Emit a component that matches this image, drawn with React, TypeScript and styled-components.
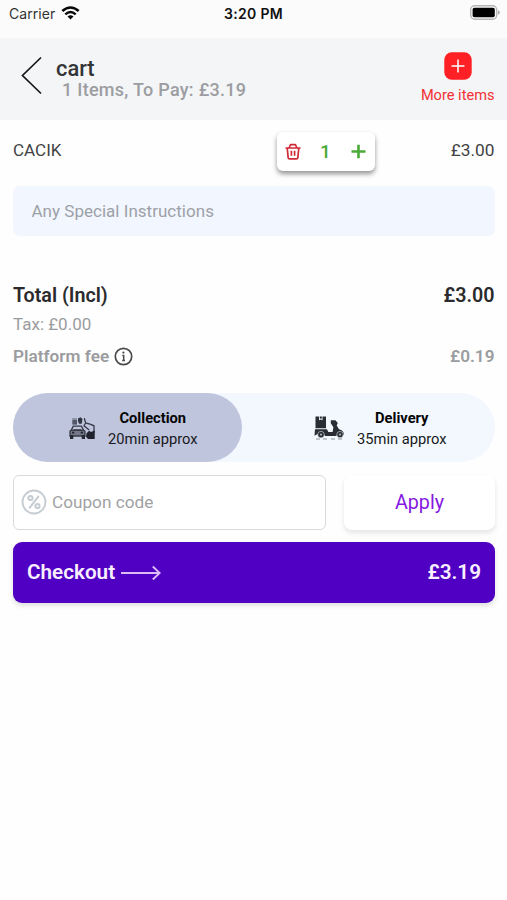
import React from "react";
import styled, { createGlobalStyle } from "styled-components";

const GlobalStyle = createGlobalStyle`
  *, *::before, *::after { box-sizing: border-box; }
  body { margin: 0; background: #fefefe; font-family: Roboto, "Liberation Sans", sans-serif; }
  button, input { font: inherit; border: 0; padding: 0; margin: 0; background: none; color: inherit; letter-spacing: inherit; }
  svg { display: block; flex: none; }
`;

const Screen = styled.div`
  width: 507px;
  height: 900px;
  overflow: hidden;
  background: #fefefe;
`;

const StatusBar = styled.div`
  display: grid;
  grid-template-columns: 1fr auto 1fr;
  align-items: center;
  height: 38px;
  padding: 0 7px 10px 9px;
  background: #fbfbfb;
  color: #111;
  font-family: Inter, sans-serif;
  font-size: 14px;
  line-height: 20px;
`;

const Carrier = styled.div`
  display: flex;
  align-items: center;
  gap: 6px;
  color: #333;
  letter-spacing: 0.05px;
  svg { margin-top: -2px; }
`;

const Clock = styled.div`
  margin-right: 2px;
  font-weight: 600;
  font-size: 14px;
  letter-spacing: 0.35px;
`;

const BatterySlot = styled.div`
  display: flex;
  justify-content: flex-end;
  margin-top: -3px;
`;

const Header = styled.header`
  display: flex;
  height: 82px;
  padding: 0 12.5px 0 21px;
  background: #f3f5f7;
`;

const BackButton = styled.button`
  width: 21px;
  height: 40px;
  margin-top: 18px;
`;

const Heading = styled.div`
  flex: 1;
  padding: 19px 0 0 14px;
`;

const Title = styled.h1`
  margin: 0;
  font-size: 21.8px;
  line-height: 23px;
  font-weight: 500;
  color: #333436;
`;

const Summary = styled.div`
  padding-left: 6px;
  font-size: 18px;
  line-height: 20px;
  font-weight: 500;
  letter-spacing: 0.28px;
  color: #9c9da1;
`;

const MoreItems = styled.button`
  display: flex;
  flex-direction: column;
  align-items: center;
  gap: 5px;
  padding-top: 14px;
  font-size: 14.6px;
  line-height: 20px;
  color: #f22f32;
`;

const Content = styled.main`
  padding: 0 12px 0 13px;
`;

const ItemRow = styled.div`
  display: grid;
  grid-template-columns: 264px 98px 1fr;
  align-items: start;
  height: 66px;
  padding-top: 12px;
  font-size: 17px;
  line-height: 37px;
  color: #424244;
`;

const ItemPrice = styled.span`
  padding-right: 0.5px;
  font-size: 17.3px;
  text-align: right;
`;

const Stepper = styled.div`
  display: grid;
  grid-template-columns: 32px 33px 33px;
  align-items: center;
  justify-items: center;
  height: 39px;
  border-radius: 6px;
  background: #fff;
  box-shadow: 0 3px 5px rgba(0, 0, 0, 0.42);
  color: #4caa38;
  font-weight: 500;
  font-size: 19px;
`;

const Instructions = styled.input`
  display: block;
  width: 100%;
  height: 50px;
  padding: 0 18px 0 18.5px;
  border-radius: 7px;
  background: #f2f6fe;
  font-size: 17px;
  letter-spacing: 0.02px;
  &::placeholder { color: #9da1a7; opacity: 1; }
`;

const Totals = styled.section`
  display: grid;
  height: 157px;
  padding-top: 44px;
  grid-template-rows: 30px 28px 35px;
`;

const TotalLine = styled.div<{ $kind: "total" | "tax" | "fee" }>`
  display: flex;
  justify-content: space-between;
  align-items: center;
  padding-right: 0.5px;
  color: ${({ $kind }) => ($kind === "total" ? "#2b2b2d" : "#9b9ca0")};
  font-weight: ${({ $kind }) => ($kind === "tax" ? 400 : 600)};
  font-size: ${({ $kind }) => ({ total: "19.7px", tax: "17px", fee: "17.2px" })[$kind]};
`;

const FeeLabel = styled.span`
  display: flex;
  align-items: center;
  gap: 5px;
  svg { margin-top: 2px; }
`;

const Modes = styled.div`
  display: grid;
  grid-template-columns: 229px 253px;
  height: 69px;
  border-radius: 35px;
  background: #f2f8fe;
`;

const Mode = styled.button<{ $active?: boolean }>`
  display: flex;
  align-items: center;
  gap: 12px;
  padding-left: ${({ $active }) => ($active ? "56px" : "72px")};
  border-radius: 35px;
  background: ${({ $active }) => ($active ? "#bfc5dd" : "transparent")};
  color: #18191c;
`;

const ModeText = styled.span`
  display: block;
  font-size: 14.7px;
  line-height: 20.5px;
  text-align: center;
  padding-top: 2px;
`;

const ModeName = styled.strong`
  display: block;
  font-weight: 700;
  color: #050506;
`;

const CouponRow = styled.div`
  display: grid;
  grid-template-columns: 313px 151px;
  justify-content: space-between;
  height: 55px;
  margin-top: 13px;
`;

const CouponField = styled.label`
  display: flex;
  align-items: center;
  gap: 5px;
  padding: 0 0 2px 7px;
  border: 1.5px solid #d9d9dc;
  border-radius: 6px;
  background: #fff;
  input { width: 240px; font-size: 17.2px; }
  input::placeholder { color: #a1a1a4; opacity: 1; }
`;

const ApplyButton = styled.button`
  padding-bottom: 1px;
  border-radius: 8px;
  background: #fff;
  box-shadow: 0 3px 5px rgba(0, 0, 0, 0.1);
  color: #8618df;
  font-size: 19.7px;
`;

const CheckoutButton = styled.button`
  display: flex;
  align-items: center;
  justify-content: space-between;
  width: 100%;
  height: 61px;
  margin-top: 12px;
  padding: 0 14px 2px;
  border-radius: 9px;
  background: #5000c3;
  box-shadow: 0 3px 5px rgba(0, 0, 0, 0.12);
  color: #f8f0ff;
  font-size: 20.7px;
  font-weight: 600;
`;

const CheckoutLabel = styled.span`
  display: flex;
  align-items: center;
  gap: 6px;
  svg { margin-top: 2px; }
`;

const WifiIcon = () => (
  <svg width="19" height="14" viewBox="0 0 19 14" fill="none" stroke="#080808">
    <path d="M1.3 5.1Q9.5-2.1 17.7 5.1" strokeWidth="2.6" />
    <path d="M4.3 8.3Q9.5 3.6 14.7 8.3" strokeWidth="2.4" />
    <path d="M6.5 10.6Q9.5 8 12.5 10.6L9.5 13.6Z" fill="#080808" stroke="none" />
  </svg>
);

const BatteryIcon = () => (
  <svg width="30" height="15" viewBox="0 0 30 15">
    <rect x=".7" y=".7" width="26" height="13.6" rx="4" fill="#fafafa" stroke="#b6b6b6" strokeWidth="1.4" />
    <rect x="2.6" y="2.7" width="22.2" height="9.6" rx="1.8" fill="#000" />
    <path d="M28 5.2Q29.8 6 29.8 7.5T28 9.8Z" fill="#aaa" />
  </svg>
);

const BackIcon = () => (
  <svg width="21" height="40" viewBox="0 0 21 40" fill="none" stroke="#171717" strokeWidth="1.7">
    <path d="M20 1.5L1.5 19.5L20 37.5" />
  </svg>
);

const AddIcon = () => (
  <svg width="28" height="28" viewBox="0 0 28 28">
    <rect x=".3" y=".3" width="27.4" height="27.4" rx="7.5" fill="#fe2024" />
    <path d="M14 7.5V20.5M7.5 14H20.5" stroke="#fff" strokeWidth="1.5" />
  </svg>
);

const TrashIcon = () => (
  <svg width="16" height="17" viewBox="0 0 16 17" fill="none" stroke="#cf2a35" strokeWidth="1.7" strokeLinejoin="round">
    <path d="M.5 5H15.5M4 5L5.6 1.7H10.4L12 5M2.2 5L3.2 14.8Q3.4 15.8 4.4 15.8H11.6Q12.6 15.8 12.8 14.8L13.8 5" />
    <path d="M6.4 7.7V12.8M9.6 7.7V12.8" strokeWidth="1.7" />
  </svg>
);

const PlusIcon = () => (
  <svg width="15" height="15" viewBox="0 0 15 15" stroke="#4caa38" strokeWidth="2.6">
    <path d="M7.5 .8V14.2M.5 7.5H14.5" />
  </svg>
);

const InfoIcon = () => (
  <svg width="19" height="19" viewBox="0 0 19 19" fill="none" stroke="#4a4a4d">
    <circle cx="9.5" cy="9.5" r="8.2" strokeWidth="1.7" />
    <path d="M8.3 8.4H9.7V13.4M8.2 13.4H11" strokeWidth="1.5" />
    <circle cx="9.4" cy="5.6" r="1.1" fill="#4a4a4d" stroke="none" />
  </svg>
);

const CollectionIcon = () => (
  <svg width="27" height="24" viewBox="0 0 27 24" fill="none" stroke="#373a46" strokeWidth="1.3">
    <rect x="3.3" y="4" width="4.7" height="4.6" fill="#525665" stroke="none" />
    <path d="M3.2 3H8" stroke="#737789" />
    <path d="M9 2.4L11.5 1.2L13.5 3L12.7 7.8H10L9 5Z" fill="#303340" stroke="none" />
    <path d="M2.2 14.4L4.3 10.1H12.4L14.7 14.4M4.3 14H12.6" />
    <path d="M1 15.3Q1 14.3 2.3 14.3H14.6Q16 14.3 16 15.7V20H1Z" fill="#737789" />
    <path d="M1 19H4.3V23H1ZM12.7 19H16V23H12.7Z" fill="#262833" stroke="none" />
    <path d="M3 16.7H5.3M11.7 16.7H14" stroke="#242631" strokeWidth="1.7" />
    <path d="M15.3 2.2L16.6 6.9L21 8.1L25 9.8V17.2M16.6 7L15 9.8L20.2 14" />
    <path d="M17.5 17.3L20.2 14.7L22 16L25.7 14.5V23H19L17 20.7Z" fill="#20222d" stroke="none" />
  </svg>
);

const ScooterIcon = () => (
  <svg width="31" height="26" viewBox="0 0 31 26">
    <path d="M1.5 1.5H5V5.3L6.8 4.5L8.5 5.3V1.5H12V13.2H1.5Z" fill="#292c32" />
    <path d="M5.8 1.5H7.8V3.8L6.8 3.4L5.8 3.8Z" fill="#292c32" />
    <path d="M1 14.2H13L14.3 17H18.6L19.4 12.3L16.8 8.2V5.3H21.4L23.8 8.1L22.7 10.4L25 14.2Q29.5 15 30 19.5L24 20L21.5 21H11L9.8 19H3.5L.5 20.8Z" fill="#292c32" />
    <circle cx="7" cy="19.6" r="3.3" fill="#292c32" stroke="#dce2e9" strokeWidth=".6" />
    <circle cx="26" cy="19.6" r="3.2" fill="#292c32" stroke="#dce2e9" strokeWidth=".6" />
    <circle cx="7" cy="19.6" r="1.1" fill="#aeb4bb" />
    <circle cx="26" cy="19.6" r="1.1" fill="#aeb4bb" />
    <path d="M2 24H6M9 24H13M17 24H21M24 24H28" stroke="#8d939b" strokeWidth="1" />
  </svg>
);

const PercentIcon = () => (
  <svg width="26" height="26" viewBox="0 0 26 26" fill="none" stroke="#c6cdd2" strokeWidth="2">
    <circle cx="13" cy="13" r="11.5" strokeWidth="1.9" />
    <path d="M17.8 6.8L8.2 19.3" />
    <circle cx="9.5" cy="9" r="2.1" />
    <circle cx="16.5" cy="17" r="2.1" />
  </svg>
);

const ArrowIcon = () => (
  <svg width="40" height="16" viewBox="0 0 40 16" fill="none" stroke="#dcbcf5" strokeWidth="1.9">
    <path d="M0 8H38.5M31.8 1.5L38.7 8L31.8 14.5" />
  </svg>
);

export default function App() {
  return (
    <>
      <GlobalStyle />
      <Screen>
        <StatusBar>
          <Carrier>Carrier <WifiIcon /></Carrier>
          <Clock>3:20 PM</Clock>
          <BatterySlot><BatteryIcon /></BatterySlot>
        </StatusBar>
        <Header>
          <BackButton aria-label="Back"><BackIcon /></BackButton>
          <Heading>
            <Title>cart</Title>
            <Summary>1 Items, To Pay: £3.19</Summary>
          </Heading>
          <MoreItems><AddIcon />More items</MoreItems>
        </Header>
        <Content>
          <ItemRow>
            <span>CACIK</span>
            <Stepper>
              <button aria-label="Remove"><TrashIcon /></button>
              <span>1</span>
              <button aria-label="Add"><PlusIcon /></button>
            </Stepper>
            <ItemPrice>£3.00</ItemPrice>
          </ItemRow>
          <Instructions placeholder="Any Special Instructions" />
          <Totals>
            <TotalLine $kind="total"><span>Total (Incl)</span><span>£3.00</span></TotalLine>
            <TotalLine $kind="tax"><span>Tax: £0.00</span></TotalLine>
            <TotalLine $kind="fee"><FeeLabel>Platform fee <InfoIcon /></FeeLabel><span>£0.19</span></TotalLine>
          </Totals>
          <Modes>
            <Mode $active>
              <CollectionIcon />
              <ModeText><ModeName>Collection</ModeName>20min approx</ModeText>
            </Mode>
            <Mode>
              <ScooterIcon />
              <ModeText><ModeName>Delivery</ModeName>35min approx</ModeText>
            </Mode>
          </Modes>
          <CouponRow>
            <CouponField><PercentIcon /><input placeholder="Coupon code" /></CouponField>
            <ApplyButton>Apply</ApplyButton>
          </CouponRow>
          <CheckoutButton>
            <CheckoutLabel>Checkout <ArrowIcon /></CheckoutLabel>
            <span>£3.19</span>
          </CheckoutButton>
        </Content>
      </Screen>
    </>
  );
}
